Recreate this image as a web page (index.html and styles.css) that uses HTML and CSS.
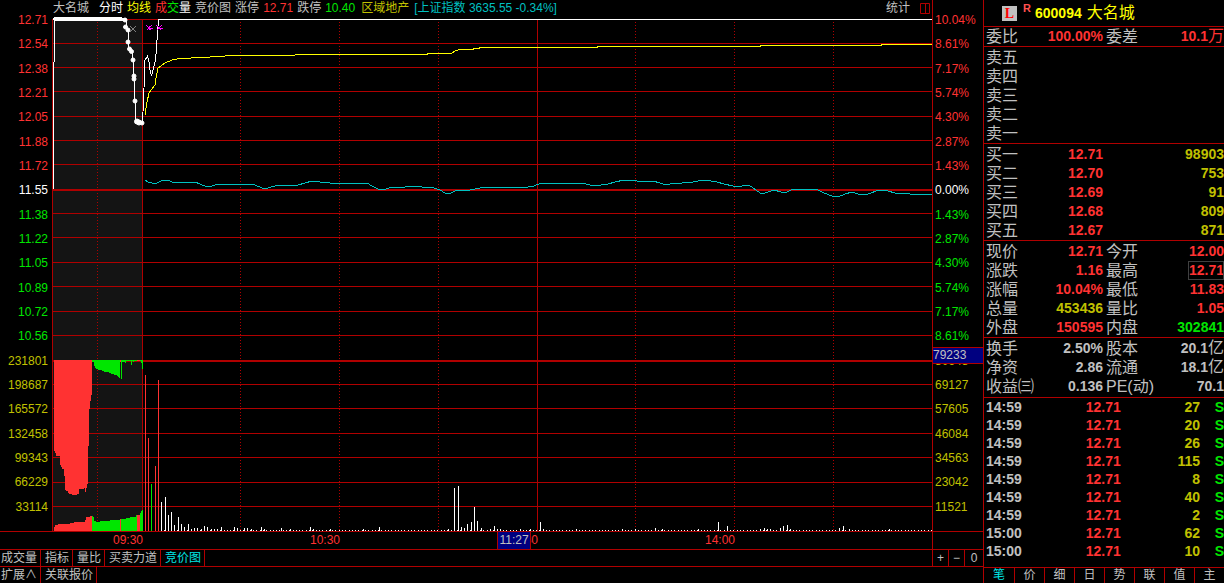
FILE: index.html
```html
<!DOCTYPE html>
<html lang="zh-CN">
<head>
<meta charset="utf-8">
<title>大名城 600094 分时</title>
<link rel="stylesheet" href="styles.css">
</head>
<body>
<main class="left">
  <section class="chart">
    <ol class="axis axis-left">
      <li class="up">12.71</li><li class="up">12.54</li><li class="up">12.38</li><li class="up">12.21</li><li class="up">12.05</li><li class="up">11.88</li><li class="up">11.72</li>
      <li class="flat">11.55</li>
      <li class="down">11.38</li><li class="down">11.22</li><li class="down">11.05</li><li class="down">10.89</li><li class="down">10.72</li><li class="down">10.56</li>
      <li class="vol">231801</li><li class="vol">198687</li><li class="vol">165572</li><li class="vol">132458</li><li class="vol">99343</li><li class="vol">66229</li><li class="vol">33114</li>
    </ol>
    <header class="title">
      <span class="name">大名城</span>
      <span class="flat">分时</span>
      <span class="avg">均线</span>
      <span><span class="up">成</span><span class="down">交</span><span class="flat">量</span></span>
      <span>竞价图</span>
      <span>涨停</span>
      <span class="up">12.71</span>
      <span>跌停</span>
      <span class="down">10.40</span>
      <span class="vol sector">区域地产</span>
      <span class="index">[上证指数 3635.55 -0.34%]</span>
      <button class="stat">统计</button>
      <button class="split" aria-label="分栏"><svg width="10" height="11" viewBox="0 0 10 11"><path d="M.5 .5h9v10h-9zM5.5 .5v10" /></svg></button>
    </header>
    <svg class="plot" viewBox="52 17 880 514" preserveAspectRatio="none">
      <rect class="auction" x="53" y="20" width="89" height="511"/>
      <path class="grid" d="M52 19.5H932M52 43.5H932M52 67.5H932M52 91.5H932M52 116.5H932M52 140.5H932M52 164.5H932M52 189.5H932M52 190.5H932M52 213.5H932M52 237.5H932M52 262.5H932M52 286.5H932M52 311.5H932M52 335.5H932M52 360.5H932M52 361.5H932M52 384.5H932M52 408.5H932M52 433.5H932M52 457.5H932M52 482.5H932M52 506.5H932M52.5 19V531M142.5 19V531M537.5 19V531"/>
      <path class="grid dotted" d="M97.5 22V531M240.5 22V531M339.5 22V531M438.5 22V531M635.5 22V531M734.5 22V531M833.5 22V531"/>

      <path class="fill-up" d="M54 360V451H55V453H56V456H60V465H61V467H62V469H64V476H65V490H66V491H68V493H69V494H72V495H77V494H79V489H84V488H85V492H86V488H87V484H88V446H89V409H90V401H91V395H92V360Z"/>
      <path class="fill-down" d="M92 360V362H94V366H95V368H96V369H98V370H102V371H104V372H109V373H111V374H114V375H117V376H118V377H119V378H120V361H121V379H122V362H125V363H126V361H131V365H132V361H133V362H134V361H141V363H142V369H143V360Z"/>
      <path class="fill-up" d="M54 531V527H55V525H58V524H70V523H74V522H85V520H86V517H90V516H92V531Z"/>
      <path class="fill-down" d="M92 531V516H93V517H94V521H96V522H100V521H110V520H120V519H126V518H130V517H136V515H140V513H141V511H142V510H143V531Z"/>
      <path class="fill-up" d="M120 519h1v12h-1zM137 515h3v16h-3zM120 360h1v2h-1zM137 360h3v1h-3z"/>

      <path class="bar-up" d="M145.5 375V531M148.5 438V531M155.5 466V531M158.5 380V531"/>
      <path class="bar-down" d="M151.5 484V531"/>
      <path class="bar" d="M161.5 502V531M165.5 497V531M168.5 515V531M171.5 512V531M174.5 525V531M178.5 517V531M181.5 524V531M184.5 527V531M188.5 524V531M191.5 529V531M194.5 528V531M197.5 528V531M201.5 529V531M204.5 526V531M207.5 527V531M211.5 529V531M214.5 529V531M217.5 529V531M221.5 527V531M224.5 530V531M234.5 527V531M237.5 528V531M244.5 528V531M247.5 528V531M251.5 529V531M261.5 527V531M264.5 529V531M281.5 528V531M290.5 529V531M310.5 527V531M313.5 529V531M330.5 529V531M363.5 529V531M379.5 527V531M448.5 529V531M454.5 488V531M458.5 486V531M461.5 527V531M464.5 528V531M467.5 524V531M471.5 522V531M474.5 507V531M477.5 521V531M481.5 528V531M490.5 529V531M494.5 526V531M497.5 529V531M500.5 529V531M520.5 529V531M530.5 529V531M540.5 522V531M543.5 529V531M576.5 529V531M622.5 529V531M635.5 529V531M655.5 528V531M662.5 529V531M698.5 529V531M718.5 522V531M727.5 526V531M760.5 529V531M764.5 528V531M767.5 529V531M770.5 529V531M780.5 528V531M783.5 526V531M787.5 525V531M790.5 529V531M839.5 528V531M843.5 526V531M849.5 529V531M889.5 529V531"/>
      <path class="bar ticks" d="M161 530.5H932"/>

      <polyline class="line index-line" points="145,180 148,182 152,183 157,183 163,180 168,180 172,182 180,183 188,182 195,182 200,184 207,187 212,186 218,184 227,185 235,184 245,184 255,185 262,188 268,188 278,185 298,185 305,183 312,181 320,182 330,183 342,183 350,184 358,183 367,183 372,186 378,189 386,189 392,187 405,187 412,186 422,187 434,188 440,190 445,193 451,193 457,190 470,190 480,188 488,187 494,188 498,187 528,187 534,186 541,183 552,183 555,184 567,183 582,183 590,185 601,185 608,184 615,182 624,180 633,180 641,182 653,181 660,183 666,185 670,184 682,183 693,182 704,180 717,182 724,184 733,186 742,186 748,185 752,187 757,191 762,194 768,192 774,190 781,192 787,192 793,189 818,190 824,193 832,196 838,197 845,194 852,192 858,194 868,194 879,190 888,191 895,193 910,194 932,195"/>
      <polyline class="line avg-line" points="145,115 147,102 149,93 151,90 155,85 156,78 158,68 161,66 165,63 172,60 180,58.500 203,57.500 232,55.500 290,55.500 300,54.500 427,54.500 428,53.500 451,53.500 455,51 460,49.500 473,49.500 474,48.500 479,48.500 480,47.500 597,47.500 598,46.500 760,46.500 761,45.500 881,45.500 882,44.500 932,44.500"/>
      <path class="line price-line" d="M53.500 189V62M54.500 62V19M126 19L126 27L128 30V42L129 49L132 52L133 60L134 78L135 101L136 121L142 123L143 112L144 88L145 60L147.500 56L149 62L150 70L151.500 76L153 70L155 62L156 54L157 40L158.500 19.500H932"/>
      <path class="price-fill" d="M53 18H54V17H122V18H126V21H122V20.500H54V20H53Z"/>
      <g class="dots"><circle cx="125.500" cy="27" r="2"/><circle cx="128" cy="30" r="2"/><circle cx="128" cy="42" r="2"/><circle cx="129.500" cy="49" r="2"/><circle cx="131.500" cy="51.500" r="2"/><circle cx="133" cy="60" r="2"/><circle cx="134" cy="76" r="2"/><circle cx="134" cy="79" r="2"/><circle cx="135" cy="101" r="2"/><circle cx="137" cy="121.500" r="2.500"/><circle cx="139" cy="122.500" r="2.500"/><circle cx="142" cy="123" r="2"/><circle cx="125" cy="20" r="2"/></g>
      <path class="mark-off" d="M130 26L136 32M136 26L130 32"/>
      <path class="mark" d="M146.500 25.500l5 5M151.500 25.500l-5 5M148 28h5M149.500 26v4M156.500 25.500l5 5M161.500 25.500l-5 5M158 28h5"/>
    </svg>
    <ol class="axis axis-right">
      <li class="up">10.04%</li><li class="up">8.61%</li><li class="up">7.17%</li><li class="up">5.74%</li><li class="up">4.30%</li><li class="up">2.87%</li><li class="up">1.43%</li>
      <li class="flat">0.00%</li>
      <li class="down">1.43%</li><li class="down">2.87%</li><li class="down">4.30%</li><li class="down">5.74%</li><li class="down">7.17%</li><li class="down">8.61%</li>
      <li class="vol cursor-row">80648<span class="cursor-value">79233</span></li>
      <li class="vol">69127</li><li class="vol">57605</li><li class="vol">46084</li><li class="vol">34563</li><li class="vol">23042</li><li class="vol">11521</li>
    </ol>
  </section>
  <div class="times">
    <span>09:30</span><span>10:30</span><span class="noon">11:30<span class="cursor-time">11:27</span></span><span>14:00</span>
    <span class="times-end"></span>
  </div>
  <nav class="tabs">
    <button>成交量</button><button>指标</button><button>量比</button><button>买卖力道</button><button class="active">竞价图</button>
    <div class="zoom"><button>+</button><button>−</button><button>0</button></div>
  </nav>
  <nav class="tabs">
    <button>扩展∧</button><button>关联报价</button>
  </nav>
</main>

<aside class="quote">
  <header class="stock"><span class="tag-l">L</span><span class="tag-r">R</span><b>600094</b><h1>大名城</h1></header>
  <dl class="facts">
    <div><dt>委比</dt><dd class="up">100.00%</dd></div><div><dt>委差</dt><dd class="up">10.1<i>万</i></dd></div>
  </dl>
  <table class="book">
    <tr><th>卖五</th><td></td><td></td></tr>
    <tr><th>卖四</th><td></td><td></td></tr>
    <tr><th>卖三</th><td></td><td></td></tr>
    <tr><th>卖二</th><td></td><td></td></tr>
    <tr><th>卖一</th><td></td><td></td></tr>
  </table>
  <table class="book">
    <tr><th>买一</th><td class="up">12.71</td><td class="vol">98903</td></tr>
    <tr><th>买二</th><td class="up">12.70</td><td class="vol">753</td></tr>
    <tr><th>买三</th><td class="up">12.69</td><td class="vol">91</td></tr>
    <tr><th>买四</th><td class="up">12.68</td><td class="vol">809</td></tr>
    <tr><th>买五</th><td class="up">12.67</td><td class="vol">871</td></tr>
  </table>
  <dl class="facts prices">
    <div><dt>现价</dt><dd class="up">12.71</dd></div><div><dt>今开</dt><dd class="up">12.00</dd></div>
    <div><dt>涨跌</dt><dd class="up">1.16</dd></div><div><dt>最高</dt><dd class="up boxed">12.71</dd></div>
    <div><dt>涨幅</dt><dd class="up">10.04%</dd></div><div><dt>最低</dt><dd class="up">11.83</dd></div>
    <div><dt>总量</dt><dd class="vol">453436</dd></div><div><dt>量比</dt><dd class="up">1.05</dd></div>
    <div><dt>外盘</dt><dd class="up">150595</dd></div><div><dt>内盘</dt><dd class="down">302841</dd></div>
  </dl>
  <dl class="facts loose">
    <div><dt>换手</dt><dd>2.50%</dd></div><div><dt>股本</dt><dd>20.1<i>亿</i></dd></div>
    <div><dt>净资</dt><dd>2.86</dd></div><div><dt>流通</dt><dd>18.1<i>亿</i></dd></div>
    <div><dt>收益㈢</dt><dd>0.136</dd></div><div><dt>PE(动)</dt><dd>70.1</dd></div>
  </dl>
  <table class="deals">
    <tr><td>14:59</td><td class="up">12.71</td><td class="vol">27</td><td class="down">S</td></tr>
    <tr><td>14:59</td><td class="up">12.71</td><td class="vol">20</td><td class="down">S</td></tr>
    <tr><td>14:59</td><td class="up">12.71</td><td class="vol">26</td><td class="down">S</td></tr>
    <tr><td>14:59</td><td class="up">12.71</td><td class="vol">115</td><td class="down">S</td></tr>
    <tr><td>14:59</td><td class="up">12.71</td><td class="vol">8</td><td class="down">S</td></tr>
    <tr><td>14:59</td><td class="up">12.71</td><td class="vol">40</td><td class="down">S</td></tr>
    <tr><td>14:59</td><td class="up">12.71</td><td class="vol">2</td><td class="down">S</td></tr>
    <tr><td>15:00</td><td class="up">12.71</td><td class="vol">62</td><td class="down">S</td></tr>
    <tr><td>15:00</td><td class="up">12.71</td><td class="vol">10</td><td class="down">S</td></tr>
  </table>
  <nav class="views">
    <button class="active">笔</button><button>价</button><button>细</button><button>日</button><button>势</button><button>联</button><button>值</button><button>主</button>
  </nav>
</aside>
</body>
</html>
```

FILE: styles.css
```css
:root {
  --rule: #b00000;
  --up: #ff3232;
  --down: #00e600;
  --text: #c0c0c0;
  --vol: #c0c000;
}

* { box-sizing: border-box; }

body {
  margin: 0;
  height: 100vh;
  display: flex;
  overflow: hidden;
  background: #000;
  color: var(--text);
  font: 12px/16px "Liberation Sans", "Noto Sans CJK SC", sans-serif;
}

button {
  margin: 0;
  padding: 0;
  border: 0;
  background: none;
  color: inherit;
  font: inherit;
}

ol, dl, dd, h1 { margin: 0; padding: 0; }
ol { list-style: none; }

.up { color: var(--up); }
.down { color: var(--down); }
.flat { color: #fff; }
.vol { color: var(--vol); }
.active { color: #00e6e6; }

/* chart side */
.left {
  flex: 1;
  min-width: 0;
  display: flex;
  flex-direction: column;
}

.chart {
  flex: 1;
  min-height: 0;
  display: grid;
  grid-template-columns: 52px minmax(0, 1fr) 51px;
  grid-template-rows: 17px minmax(0, 1fr);
}

.axis {
  grid-row: 1 / 3;
  display: flex;
  flex-direction: column;
  padding: 8px 0 12px;
}
.axis li {
  flex: 1;
  display: flex;
  align-items: center;
}
.axis-left { grid-column: 1; }
.axis-left li { justify-content: flex-end; padding-right: 4px; }
.axis-right { grid-column: 3; border-left: 1px solid var(--rule); }
.axis-right li { padding-left: 2px; }

.cursor-row { position: relative; }
.cursor-value {
  position: absolute;
  left: 0;
  right: 0;
  bottom: 9px;
  border: solid var(--rule);
  border-width: 1px 0;
  background: #000080;
  color: var(--text);
  line-height: 15px;
}

.title {
  grid-column: 2;
  grid-row: 1;
  display: flex;
  gap: 4px;
  padding: 0 2px 0 1px;
  white-space: nowrap;
  line-height: 17px;
}
.name { padding-right: 6px; }
.avg { color: #ff0; }
.sector { padding: 0 1px 0 2px; }
.index { color: #00c0c0; }
.stat { margin-left: auto; }
.split { display: flex; align-items: center; padding-left: 6px; }
.split path { fill: none; stroke: var(--rule); }

.plot {
  grid-column: 2;
  grid-row: 2;
  display: block;
  width: 100%;
  height: 100%;
  shape-rendering: crispEdges;
}
.auction { fill: #141414; }
.grid { fill: none; stroke: var(--rule); }
.dotted { stroke-dasharray: 1 2; }
.fill-up { fill: var(--up); }
.fill-down { fill: var(--down); }
.bar { stroke: #fff; }
.bar-up { stroke: var(--up); }
.bar-down { stroke: var(--down); }
.ticks { stroke-dasharray: 1 2.29; }
.line { fill: none; stroke-width: 1; }
.index-line { stroke: #00c0c0; }
.avg-line { stroke: #ff0; }
.price-line { stroke: #fff; }
.price-fill { fill: #fff; }
.dots { fill: #fff; stroke: #fff; shape-rendering: geometricPrecision; }
.mark { stroke: #f0f; fill: none; }
.mark-off { stroke: #808080; fill: none; }

.times {
  display: grid;
  grid-template-columns: 143fr 197fr 198fr 197fr 197fr 51px;
  height: 18px;
  border-top: 1px solid var(--rule);
  color: var(--up);
  text-align: right;
}
.times-end { grid-column: 6; border-left: 1px solid var(--rule); }
.noon { position: relative; }
.cursor-time {
  position: absolute;
  top: -1px;
  right: 7px;
  width: 34px;
  border: 1px solid var(--rule);
  border-bottom: 0;
  background: #000080;
  color: var(--text);
  line-height: 17px;
  text-align: center;
}

.tabs {
  display: flex;
  height: 17px;
  border-top: 1px solid var(--rule);
}
.tabs button {
  padding: 0 3px 0 4px;
  border-right: 1px solid var(--rule);
  line-height: 16px;
}
.tabs > button:first-child { padding-left: 1px; }
.zoom {
  display: grid;
  grid-template-columns: 16px 16px 18px;
  width: 51px;
  margin-left: auto;
  border-left: 1px solid var(--rule);
}
.zoom button { padding: 0; }
.zoom button:last-child { border-right: 0; }

/* quote side */
.quote {
  width: 241px;
  display: flex;
  flex-direction: column;
  border-left: 1px solid var(--rule);
  font-size: 14px;
  font-weight: bold;
  white-space: nowrap;
}

.stock {
  display: flex;
  align-items: center;
  height: 26px;
  padding-left: 18px;
  color: #ff0;
}
.tag-l {
  width: 15px;
  background: var(--text);
  color: #f00;
  font: bold 14px/15px "Liberation Serif", serif;
  text-align: center;
}
.tag-r {
  align-self: flex-start;
  width: 18px;
  padding-left: 6px;
  color: #ff5050;
  font-size: 11px;
}
.stock h1 { padding-left: 5px; font-size: 16px; font-weight: normal; }

.facts {
  display: grid;
  grid-template-columns: 1fr 1fr;
  grid-auto-rows: 19px;
  border-top: 1px solid var(--rule);
  line-height: 19px;
}
.facts > div {
  display: flex;
  justify-content: space-between;
  min-width: 0;
  padding: 0 0 0 2px;
}
.facts dt, .facts i, .book th {
  font-size: 16px;
  font-weight: normal;
  font-style: normal;
}
.facts i { line-height: 1; }
.facts > div:nth-child(odd) { padding-right: 1px; }
.prices { padding-top: 1px; }
.loose { padding: 1px 0; }
.boxed { padding-left: 1px; outline: 1px solid #404040; outline-offset: -1px; }

.book, .deals {
  width: 100%;
  border-spacing: 0;
  border-top: 1px solid var(--rule);
  table-layout: fixed;
}
.book { padding-top: 1px; }
.book th, .book td, .deals td { height: 19px; padding: 0; line-height: 19px; text-align: right; }
.book th { width: 21%; padding-left: 2px; text-align: left; }
.book td:nth-child(2) { width: 29%; padding-right: 1px; }

.deals td { height: 18px; line-height: 18px; }
.deals td:nth-child(1) { width: 25%; padding-left: 2px; text-align: left; }
.deals td:nth-child(2) { width: 32%; }
.deals td:nth-child(3) { width: 33%; }

.views {
  display: grid;
  grid-template-columns: repeat(8, 1fr);
  margin-top: auto;
  border-top: 1px solid var(--rule);
  font-size: 12px;
  font-weight: normal;
  line-height: 15px;
}
.views button + button { border-left: 1px solid var(--rule); }
```
